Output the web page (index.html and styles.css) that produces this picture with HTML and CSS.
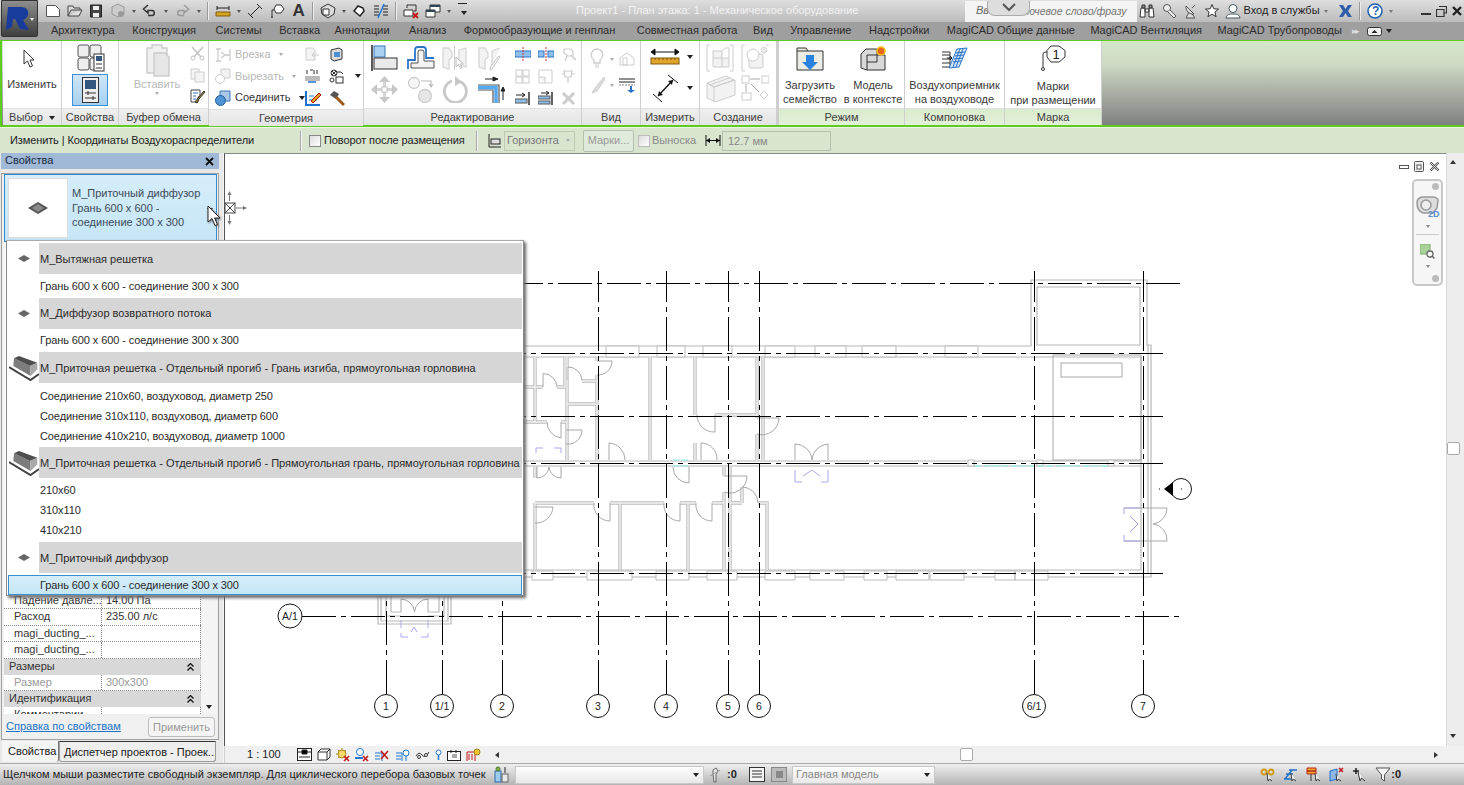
FILE: index.html
```html
<!DOCTYPE html>
<html lang="ru">
<head>
<meta charset="utf-8">
<title>Проект1 - План этажа: 1 - Механическое оборудование</title>
<link rel="stylesheet" href="styles.css">
</head>
<body>
<div class="app">
  <header class="titlebar">
    <div class="qat">
      <svg class="i" width="16" height="16" viewBox="0 0 16 16"><path d="M1.5 2.5h9l4 4v7h-13z" fill="#fff" stroke="#555"/></svg>
      <svg class="i" width="16" height="16" viewBox="0 0 16 16"><path d="M1 13V3h5l1 2h6v2H4l-3 6h11l3-6h-2" fill="#ddd" stroke="#444"/></svg>
      <svg class="i" width="14" height="16" viewBox="0 0 14 16"><path d="M1.5 2h11v12h-11z" fill="#444" stroke="#222"/><path d="M4 3h6v4H4zM4 10h6v4H4z" fill="#eee"/></svg>
      <svg class="i" width="16" height="16" viewBox="0 0 16 16"><path d="M8 1l6 3v7l-6 3-6-3V4z" fill="#ccc" stroke="#999"/><circle cx="11" cy="11" r="3" fill="#999"/></svg>
      <i class="caret"></i>
      <svg class="i" width="16" height="16" viewBox="0 0 16 16"><path d="M6 2L1.5 6 6 10V7.5h4c3 0 3 5 0 5H6" fill="none" stroke="#333" stroke-width="1.5"/></svg>
      <i class="caret"></i>
      <svg class="i" width="16" height="16" viewBox="0 0 16 16"><path d="M10 2l4.5 4L10 10V7.5H6c-3 0-3 5 0 5h4" fill="none" stroke="#999" stroke-width="1.5"/></svg>
      <i class="caret"></i>
      <b class="sep"></b>
      <svg class="i" width="16" height="16" viewBox="0 0 16 16"><path d="M2 5h12M2 3v4M14 3v4" stroke="#222" fill="none"/><path d="M1 9h14v4H1z" fill="#d9a520" stroke="#7a5c10"/></svg>
      <i class="caret"></i>
      <svg class="i" width="16" height="16" viewBox="0 0 16 16"><path d="M3 13L13 3M1 10l5 5M10 1l5 5" stroke="#222" fill="none"/></svg>
      <svg class="i" width="16" height="16" viewBox="0 0 16 16"><path d="M7 2h5l3 4-3 4H7L5 6z" fill="#fff" stroke="#333"/><path d="M5 7H3v6" fill="none" stroke="#333"/><circle cx="3" cy="14" r="1" fill="#333"/></svg>
      <span class="qat-a">A</span>
      <b class="sep"></b>
      <svg class="i" width="16" height="16" viewBox="0 0 16 16"><path d="M8 1l7 4-1 6-6 4-6-4-1-6z" fill="#ddd" stroke="#333"/><path d="M3 6h6v6H3z" fill="#fff" stroke="#333"/></svg>
      <i class="caret"></i>
      <svg class="i" width="14" height="16" viewBox="0 0 14 16"><path d="M2 8l4-5 5 2 1 3-4 5z" fill="#fff" stroke="#222" stroke-width="1.5"/></svg>
      <svg class="i" width="16" height="16" viewBox="0 0 16 16"><path d="M1 3h5M1 6h5M1 9h5M1 12h5M10 3h5M10 6h5M10 9h5M10 12h5" stroke="#222"/><path d="M11 1L5 15" stroke="#1e78d2" stroke-width="1.5"/></svg>
      <b class="sep"></b>
      <svg class="i" width="16" height="16" viewBox="0 0 16 16"><path d="M1 7h9v6H1z" fill="#fff" stroke="#333"/><path d="M4 5V2h9v6h-2" fill="none" stroke="#333"/><path d="M10 10l5 5M15 10l-5 5" stroke="#c01818" stroke-width="1.8"/></svg>
      <svg class="i" width="16" height="16" viewBox="0 0 16 16"><path d="M5 2h10v7H5z" fill="#fff" stroke="#333"/><path d="M1 7h9v7H1z" fill="#fff" stroke="#333"/><path d="M5 2h10v2H5zM1 7h9v2H1z" fill="#345"/></svg>
      <i class="caret"></i>
      <span class="qat-menu"><i class="caret dark"></i></span>
    </div>
    <div class="doc-title">Проект1 - План этажа: 1 - Механическое оборудование</div>
    <div class="search"><span class="search-left">Вв</span><span class="search-tab"><svg width="16" height="9" viewBox="0 0 16 9"><path d="M2 1l6 6 6-6" fill="none" stroke="#555" stroke-width="2"/></svg></span><span class="search-text">ключевое слово/фразу</span></div>
    <div class="infocenter">
      <svg class="i" width="16" height="16" viewBox="0 0 16 16"><path d="M2 5h4v9H1zM10 5h4l1 9h-5zM6 6h4v3H6z" fill="#fff" stroke="#333"/><path d="M3 2h3v3H3zM10 2h3v3h-3z" fill="#888" stroke="#333"/></svg>
      <svg class="i" width="16" height="16" viewBox="0 0 16 16"><circle cx="5" cy="5" r="3.5" fill="#eee" stroke="#555"/><path d="M8 7l6 6-2 2-6-6" fill="#eee" stroke="#555"/></svg>
      <svg class="i" width="14" height="16" viewBox="0 0 14 16"><path d="M2 3a7 7 0 0 0 8 8zM5 9l-3 6h9l-3-4M8 5l3-3" fill="#ddd" stroke="#555"/></svg>
      <svg class="i" width="14" height="16" viewBox="0 0 14 16"><path d="M7 1.5l1.8 4.3 4.7.3-3.6 3 1.2 4.6L7 11.200l-4.100 2.500 1.200-4.600-3.600-3 4.700-.3z" fill="#fff" stroke="#333"/></svg>
      <svg class="i user" width="16" height="16" viewBox="0 0 16 16"><circle cx="8" cy="5.500" r="4" fill="#fff" stroke="#456"/><path d="M1 15c1-4 4-4 7-4s6 0 7 4z" fill="#fff" stroke="#456"/></svg>
      <span class="login">Вход в службы</span><i class="caret light"></i>
      <svg class="i xicon" width="15" height="16" viewBox="0 0 15 16"><path d="M1 2h4l2.500 4L10 2h4l-4 6 4 6h-4l-2.500-4L5 14H1l4-6z" fill="#2f5da8"/></svg>
      <b class="sep"></b>
      <svg class="i" width="16" height="16" viewBox="0 0 16 16"><circle cx="8" cy="8" r="7" fill="#fff" stroke="#1e5fb0" stroke-width="1.500"/><text class="svg-help" x="5" y="12">?</text></svg>
      <i class="caret light"></i>
      <span class="winbtns">
        <svg width="10" height="10" viewBox="0 0 10 10"><path d="M0 8h10" stroke="#333" stroke-width="2"/></svg>
        <svg width="11" height="11" viewBox="0 0 11 11"><path d="M3 .5h7.500V7H8M.5 3.500H8V10.500H.5z" fill="none" stroke="#333" stroke-width="1.200"/></svg>
        <svg width="10" height="10" viewBox="0 0 10 10"><path d="M1 1l8 8M9 1l-8 8" stroke="#222" stroke-width="2.400"/></svg>
      </span>
    </div>
  </header>

  <div class="app-button">
    <svg width="28" height="28" viewBox="0 0 28 28"><path d="M3 2h13c6 0 8 4 7 8-1 3-3 4-5 5l6 10-9-1-5-10-2 0-1 8-6 3 1-12z" fill="#183c9c"/></svg>
    <i class="caret app-caret"></i>
  </div>

  <nav class="tabs">
    <span>Архитектура</span><span>Конструкция</span><span>Системы</span><span>Вставка</span><span>Аннотации</span><span>Анализ</span><span>Формообразующие и генплан</span><span>Совместная работа</span><span>Вид</span><span>Управление</span><span>Надстройки</span><span>MagiCAD Общие данные</span><span>MagiCAD Вентиляция</span><span>MagiCAD Трубопроводы</span>
    <em class="tabs-more">▸▸</em>
    <svg class="tabs-min" width="15" height="9" viewBox="0 0 15 9"><rect x=".5" y=".5" width="14" height="8" rx="2" fill="#eee" stroke="#333"/><path d="M4.500 6l3-3 3 3z" fill="#222"/></svg>
    <i class="caret dark"></i>
  </nav>

  <section class="ribbon">
    <div class="panel w-select">
      <div class="body col-center">
        <svg class="cursor-big" width="12" height="19" viewBox="0 0 12 19"><path d="M1 1v14l3.500-3 2.500 6 2.500-1-2.500-6H11z" fill="#fff" stroke="#333"/></svg>
        <span class="lbl">Изменить</span>
      </div>
      <div class="ptitle">Выбор <i class="caret dark"></i></div>
    </div>
    <div class="panel w-props">
      <div class="body col-center top4">
        <svg width="30" height="28" viewBox="0 0 30 28"><g fill="#eee" stroke="#555"><rect x="3" y="1" width="11" height="12" rx="2"/><rect x="15" y="1" width="11" height="12" rx="2"/><rect x="3" y="14" width="11" height="12" rx="2"/><rect x="15" y="14" width="6" height="12" rx="2"/></g><rect x="19" y="10" width="10" height="17" fill="#fff" stroke="#333"/><rect x="21" y="12" width="6" height="5" fill="#33567f"/><path d="M21 20h6M21 24h6" stroke="#333"/></svg>
        <div class="selbtn"><svg width="17" height="26" viewBox="0 0 17 26"><rect x=".5" y=".5" width="16" height="25" fill="#eee" stroke="#333"/><rect x="3" y="3" width="11" height="9" fill="#33567f"/><path d="M3 16h11M3 21h11" stroke="#333"/><path d="M6 14v4M11 19v4" stroke="#333"/></svg></div>
      </div>
      <div class="ptitle">Свойства</div>
    </div>
    <div class="panel w-clip">
      <div class="body clip-body">
        <div class="clip-main">
          <svg width="25" height="33" viewBox="0 0 25 33"><path d="M2 4h5V1h10v3h5v25H2z" fill="#f0f0f0" stroke="#ccc" stroke-width="1.500"/><path d="M9 9h11l4 4v19H9z" fill="#e6e6e6" stroke="#ccc" stroke-width="1.500"/></svg>
          <span class="lbl off">Вставить</span>
          <i class="caret off-c"></i>
        </div>
        <div class="clip-side">
          <svg width="15" height="15" viewBox="0 0 15 15"><path d="M2 1l9 10M13 1L4 11" stroke="#c4c4c4" stroke-width="1.600"/><circle cx="3" cy="12" r="2" fill="none" stroke="#c4c4c4"/><circle cx="12" cy="12" r="2" fill="none" stroke="#c4c4c4"/></svg>
          <svg width="15" height="15" viewBox="0 0 15 15"><path d="M1 1h8v10H1z" fill="#f4f4f4" stroke="#ccc"/><path d="M5 4h9v10H5z" fill="#f4f4f4" stroke="#ccc"/></svg>
          <svg width="16" height="16" viewBox="0 0 16 16"><path d="M1 1h9v6l-2 1v5H1z" fill="#fff" stroke="#444"/><path d="M3 4h5M3 7h3M3 10h3" stroke="#2f6fc0"/><path d="M14 2l1 1-6 7-2 4-2-1 3-4z" fill="#b08a3a" stroke="#333"/></svg>
        </div>
      </div>
      <div class="ptitle">Буфер обмена</div>
    </div>
    <div class="panel w-geom">
      <div class="body geom-body">
        <div class="geom-rows">
          <div class="grow off"><svg width="16" height="16" viewBox="0 0 16 16"><path d="M1 2h5M1 14h5M3 2v12M15 2v12M10 8h5M6 5l4 3-4 3" fill="none" stroke="#ccc" stroke-width="1.300"/></svg><span>Врезка</span><i class="caret off-c"></i></div>
          <div class="grow off"><svg width="16" height="16" viewBox="0 0 16 16"><path d="M6 1h9v9H6z" fill="#f2f2f2" stroke="#ccc"/><circle cx="5" cy="11" r="4.500" fill="#fff" stroke="#ccc"/></svg><span>Вырезать</span><i class="caret off-c"></i></div>
          <div class="grow"><svg width="16" height="16" viewBox="0 0 16 16"><path d="M5 1h10v10H5z" fill="#a9c8e8" stroke="#3a78b8"/><circle cx="5.500" cy="10.500" r="5" fill="#4f94d4" stroke="#245f9c"/></svg><span>Соединить</span><i class="caret dark"></i></div>
        </div>
        <div class="geom-icons">
          <svg width="15" height="15" viewBox="0 0 15 15"><path d="M1 1h7l2 2v10H1z" fill="#f4f4f4" stroke="#ccc"/><path d="M14 8H7l3-3M7 8l3 3" fill="none" stroke="#ccc"/></svg>
          <svg width="14" height="15" viewBox="0 0 14 15"><path d="M2 3l8-2 3 2v9l-8 2-3-2z" fill="#ddd" stroke="#333"/><rect x="5" y="5" width="6" height="5" fill="#4c90d0"/></svg>
          <span></span>
          <svg width="15" height="15" viewBox="0 0 15 15"><path d="M0 8h15M0 11h15" stroke="#777"/><rect y="7" width="15" height="4" fill="#bbb"/><path d="M5 1h3M9 1v4M12 1v4M2 1v4" stroke="#333"/><path d="M3 13h8" stroke="#2070d0" stroke-width="1.500"/></svg>
          <svg width="20" height="15" viewBox="0 0 20 15"><circle cx="5" cy="4" r="3" fill="#eee" stroke="#333"/><path d="M3 2l4 4M7 2l-4 4" stroke="#333"/><circle cx="3" cy="11" r="2" fill="#fff" stroke="#333"/><rect x="7" y="8" width="7" height="6" fill="#fff" stroke="#333"/><path d="M8 3h4l2 2" fill="none" stroke="#333"/></svg>
          <i class="caret dark"></i>
          <svg width="16" height="16" viewBox="0 0 16 16"><path d="M1 1v14h14" fill="none" stroke="#2070d0" stroke-width="2"/><path d="M4 6h5M4 10h8" stroke="#2070d0"/><path d="M6 11L14 3l2 2-8 8z" fill="#e0a020" stroke="#a00"/></svg>
          <svg width="16" height="16" viewBox="0 0 16 16"><path d="M1 5l4-4 5 3-3 5z" fill="#555"/><path d="M7 7l8 8" stroke="#9a5a20" stroke-width="3"/></svg>
        </div>
      </div>
      <div class="ptitle">Геометрия</div>
    </div>
    <div class="panel w-edit">
      <div class="body edit-body">
        <div class="edit-big">
          <svg width="27" height="26" viewBox="0 0 27 26"><rect x="3" y="1" width="11" height="11" fill="#a9d0f0" stroke="#3a78b8"/><rect x="3" y="13" width="23" height="11" fill="#eaeaea" stroke="#333"/><path d="M1 0v26" stroke="#222" stroke-width="1.500"/></svg>
          <svg width="28" height="26" viewBox="0 0 28 26"><path d="M1 24v-9h7V5q0-3 3-3h5q3 0 3 3v8h8" fill="none" stroke="#2a74c8" stroke-width="1.800"/><path d="M4 23v-5h7V7q0-2 2-2h2q2 0 2 2v9h10v7z" fill="#f4f4f4" stroke="#555"/></svg>
          <svg width="25" height="26" viewBox="0 0 25 26"><path d="M1 3h6l3 5v4l-3 3v9l-6-2zM24 3l-7 2v15l7 2z" fill="#f2f2f2" stroke="#d6d6d6" stroke-width="1.300"/><path d="M12.500 1v24" stroke="#ccc"/><path d="M14 12v10l2.500-2.500 2 4 1.500-1-2-3.500h3.500z" fill="#f8f8f8" stroke="#c0c0c0"/></svg>
          <svg width="24" height="26" viewBox="0 0 24 26"><path d="M1 3h6l3 5v4l-3 3v9l-6-2zM22 3l-8 3v14" fill="#f2f2f2" stroke="#d6d6d6" stroke-width="1.300"/><path d="M22 12L14 24l-2 1 .5-3 8-11z" fill="#f8f8f8" stroke="#c4c4c4"/></svg>
          <svg width="27" height="27" viewBox="0 0 27 27"><g fill="#c8c8c8"><path d="M13.500 0l5.500 6h-11zM13.500 27l5.500-6h-11zM0 13.500l6-5.500v11zM27 13.500l-6-5.500v11z"/></g><path d="M6 13.500h15M13.500 6v15" stroke="#d4d4d4" stroke-width="3"/><rect x="11" y="11" width="5" height="5" fill="#fff" stroke="#c4c4c4"/></svg>
          <svg width="27" height="27" viewBox="0 0 27 27"><circle cx="7" cy="7" r="5.500" fill="#f6f6f6" stroke="#ccc" stroke-width="1.300"/><circle cx="18" cy="20" r="6.500" fill="#e6e6e6" stroke="#ccc" stroke-width="1.300"/><path d="M14 5h10v5M22 8l2 3 2-3" fill="none" stroke="#bbb" stroke-width="1.200"/></svg>
          <svg width="26" height="27" viewBox="0 0 26 27"><path d="M18 5.500a11 11 0 1 1-8-.5" fill="none" stroke="#c8c8c8" stroke-width="2.800"/><path d="M13 0v10l7-4z" fill="#c8c8c8"/></svg>
          <svg width="27" height="27" viewBox="0 0 27 27"><path d="M7 3h12M15 1l5 2-5 2z" fill="#222" stroke="#222"/><path d="M0 9h21v18M0 14h15v13" fill="none" stroke="#555" stroke-width="1.200"/><path d="M0 11.500h18V27" fill="none" stroke="#55a8ee" stroke-width="3.500"/><path d="M25 12v12M23 15l2-4 2 4z" fill="#222" stroke="#222"/></svg>
        </div>
        <div class="edit-small">
          <svg width="16" height="14" viewBox="0 0 16 14"><rect y="4" width="16" height="6" fill="#8fc0ea" stroke="#2a74c8"/><path d="M8 0v14" stroke="#c33" stroke-dasharray="2 1"/></svg>
          <svg width="16" height="14" viewBox="0 0 16 14"><rect y="4" width="6" height="6" fill="#8fc0ea" stroke="#2a74c8"/><rect x="10" y="4" width="6" height="6" fill="#8fc0ea" stroke="#2a74c8"/><path d="M8 0v14" stroke="#c33" stroke-dasharray="2 1"/></svg>
          <svg width="16" height="15" viewBox="0 0 16 15"><path d="M3 2h7l2 3v4H7L3 6zM6 9l-2 5M10 8l4 5M11 9l4 4" fill="none" stroke="#ccc" stroke-width="1.200"/></svg>
          <svg width="15" height="15" viewBox="0 0 15 15"><g fill="#fff" stroke="#ccc"><rect x="1" y="1" width="6" height="6"/><rect x="8" y="1" width="6" height="6"/><rect x="1" y="8" width="6" height="6"/><rect x="8" y="8" width="6" height="6"/></g></svg>
          <svg width="15" height="15" viewBox="0 0 15 15"><path d="M1 1h13v13H1z" fill="#fff" stroke="#ccc"/><path d="M1 8h6v6" fill="#f0f0f0" stroke="#ccc"/></svg>
          <svg width="15" height="15" viewBox="0 0 15 15"><path d="M3 2h8l-1 6H4zM7 8v6M1 5h2M11 5h3" fill="none" stroke="#ccc" stroke-width="1.200"/></svg>
          <svg width="15" height="15" viewBox="0 0 15 15"><path d="M1 4h9M7 2l3 2-3 2" fill="none" stroke="#222"/><path d="M14 1v13" stroke="#222" stroke-width="1.400"/><rect y="8" width="12" height="4" fill="#8fc0ea" stroke="#555"/></svg>
          <svg width="15" height="15" viewBox="0 0 15 15"><path d="M3 2h8M8 0l3 2-3 2" fill="none" stroke="#222"/><path d="M14 1v13" stroke="#222" stroke-width="1.400"/><rect y="5" width="12" height="3" fill="#8fc0ea" stroke="#555"/><rect y="10" width="12" height="3" fill="#8fc0ea" stroke="#555"/></svg>
          <svg width="15" height="15" viewBox="0 0 15 15"><path d="M2 2l11 11M13 2L2 13" stroke="#ccc" stroke-width="3"/></svg>
        </div>
      </div>
      <div class="ptitle">Редактирование</div>
    </div>
    <div class="panel w-view">
      <div class="body view-body">
        <svg width="14" height="22" viewBox="0 0 14 22"><path d="M7 1a6 6 0 0 1 3 11v3H4v-3A6 6 0 0 1 7 1z" fill="#fff" stroke="#ccc" stroke-width="1.300"/><path d="M5 17h4M5 19h4" stroke="#ccc"/></svg>
        <i class="caret off-c"></i>
        <svg width="16" height="14" viewBox="0 0 16 14"><path d="M1 6l7-5 7 5v7H1z" fill="#fff" stroke="#ccc"/><path d="M4 6h4v7H4z" fill="none" stroke="#ccc"/></svg>
        <svg width="15" height="18" viewBox="0 0 15 18"><path d="M14 1l-9 11-3 5 5-2 8-12z" fill="#ddd" stroke="#ccc"/></svg>
        <i class="caret off-c"></i>
        <svg width="16" height="15" viewBox="0 0 16 15"><path d="M0 1h16M0 4h16" stroke="#222"/><path d="M0 7h16" stroke="#888" stroke-dasharray="2 1"/><path d="M11 8v4h-3l4 3 4-3h-3V8z" fill="#2a74c8"/></svg>
      </div>
      <div class="ptitle">Вид</div>
    </div>
    <div class="panel w-measure">
      <div class="body measure-body">
        <svg width="30" height="18" viewBox="0 0 30 18"><path d="M3 4h24M1 4l4-3v6zM29 4l-4-3v6z" fill="#111" stroke="#111"/><rect x="1" y="10" width="28" height="6" fill="#e2a52c" stroke="#7c5a10"/><path d="M5 10v2M9 10v2M13 10v2M17 10v2M21 10v2M25 10v2" stroke="#7c5a10"/></svg>
        <i class="caret dark"></i>
        <svg width="27" height="28" viewBox="0 0 27 28"><path d="M6 22L21 6" stroke="#111" stroke-width="1.200"/><path d="M1 20l9 8M16 1l10 8" stroke="#111"/><path d="M6 22l1-5 4 4zM21 6l-1 5-4-4z" fill="#111"/></svg>
        <i class="caret dark"></i>
      </div>
      <div class="ptitle">Измерить</div>
    </div>
    <div class="panel w-create">
      <div class="body create-body">
        <svg width="28" height="28" viewBox="0 0 28 28"><path d="M4 1H1v26h3M24 1h3v26h-3" fill="none" stroke="#ccc"/><path d="M7 7h9v7h7v9H7z" fill="#f2f2f2" stroke="#ccc"/><path d="M7 14h9v9M16 7l3-3h4v10" fill="none" stroke="#ccc"/></svg>
        <svg width="29" height="28" viewBox="0 0 29 28"><path d="M4 1H1v26h3M25 1h3" fill="none" stroke="#ccc"/><rect x="8" y="10" width="14" height="14" rx="2" fill="#f2f2f2" stroke="#ccc"/><circle cx="12" cy="11" r="6" fill="#fff" stroke="#ccc"/><circle cx="23" cy="6" r="3" fill="#e8e8e8" stroke="#ccc" stroke-dasharray="2 1"/></svg>
        <svg width="30" height="28" viewBox="0 0 30 28"><path d="M1 8l19-7 8 4-20 7zM1 8v15l8 4 20-7V5L8 12 1 8" fill="#f2f2f2" stroke="#ccc"/><path d="M4 10l19-7M8 12v15" stroke="#ccc"/></svg>
        <svg width="28" height="26" viewBox="0 0 28 26"><g fill="#fff" stroke="#ccc"><rect x="1" y="1" width="7" height="7"/><rect x="21" y="1" width="7" height="7"/><rect x="1" y="18" width="9" height="7"/><path d="M23 16l4 4-4 4-4-4z"/></g><path d="M9 4h10M5 9v8M10 9l8 8" stroke="#aaa"/></svg>
      </div>
      <div class="ptitle">Создание</div>
    </div>
    <div class="ribbon-gap"></div>
    <div class="panel ctx w-mode">
      <div class="body two-btns">
        <div class="bigbtn">
          <svg width="28" height="26" viewBox="0 0 28 26"><path d="M1 3h9l2 3h15v19H1z" fill="#ecece6" stroke="#333"/><path d="M1 6h11" stroke="#333"/><path d="M10 10h8v7h4l-8 8-8-8h4z" fill="#2a82e0"/></svg>
          <span>Загрузить<br>семейство</span>
        </div>
        <div class="bigbtn">
          <svg width="28" height="26" viewBox="0 0 28 26"><path d="M2 9l5-5h11v6h8v15H8l-6-2z" fill="#d8d8d8" stroke="#333"/><path d="M8 10h10M8 10v15M8 17h10v-7" fill="none" stroke="#333"/><circle cx="22" cy="6" r="4" fill="#e8641a" stroke="#f5c118" stroke-width="1.500"/></svg>
          <span>Модель<br>в контексте</span>
        </div>
      </div>
      <div class="ptitle ctx-t">Режим</div>
    </div>
    <div class="panel ctx w-layout">
      <div class="body one-btn">
        <div class="bigbtn">
          <svg width="27" height="22" viewBox="0 0 27 22"><path d="M1 8h8M1 12h8M1 16h8M1 5h8v15H1" fill="none" stroke="#333"/><path d="M16 2l10-1-8 19-10 1z" fill="#cfe2f6" stroke="#2a74c8"/><path d="M15 6l9-1M14 9l9-1M13 12l9-1M12 15l8-1M19 2l-7 18M22 2l-7 18" stroke="#2a74c8"/><path d="M6 11h5M9 9l2 2-2 2" fill="none" stroke="#111"/></svg>
          <span>Воздухоприемник<br>на воздуховоде</span>
        </div>
      </div>
      <div class="ptitle ctx-t">Компоновка</div>
    </div>
    <div class="panel ctx w-tag">
      <div class="body one-btn">
        <div class="bigbtn">
          <svg width="28" height="27" viewBox="0 0 28 27"><path d="M8 7h-1q-3 0-3 2v13" fill="none" stroke="#333"/><circle cx="4" cy="24" r="1.500" fill="#fff" stroke="#333"/><path d="M12 1h8l6 4.500V12l-6 5h-8l-4-5V5.500z" fill="#fff" stroke="#333"/><text class="svg-tag" x="13.500" y="14">1</text></svg>
          <span>Марки<br>при размещении</span>
        </div>
      </div>
      <div class="ptitle ctx-t">Марка</div>
    </div>
  </section>

  <div class="options">
    <span class="opt-ctx">Изменить | Координаты Воздухораспределители</span>
    <b class="opt-sep"></b>
    <i class="check"></i><span class="opt-rot">Поворот после размещения</span>
    <b class="opt-sep2"></b>
    <svg class="opt-ic" width="15" height="15" viewBox="0 0 15 15"><path d="M2 1v13h12" fill="none" stroke="#222"/><rect x="4" y="6" width="9" height="5" fill="#ddd" stroke="#222"/></svg>
    <span class="opt-select">Горизонта<i class="caret off-c"></i></span>
    <span class="opt-btn">Марки...</span>
    <i class="check off-chk"></i><span class="opt-lead">Выноска</span>
    <svg class="opt-ic2" width="16" height="13" viewBox="0 0 16 13"><path d="M1 1v11M15 1v11M1 6.500h14" stroke="#111"/><path d="M1 6.500l4-2.500v5zM15 6.500l-4-2.500v5z" fill="#111"/></svg>
    <span class="opt-input">12.7 мм</span>
  </div>

  <main class="main">
    <aside class="side">
      <div class="side-title"><span>Свойства</span><svg width="9" height="9" viewBox="0 0 9 9"><path d="M1 1l7 7M8 1L1 8" stroke="#111" stroke-width="1.800"/></svg></div>
      <div class="side-frame">
        <div class="type-sel">
          <div class="type-thumb"><svg width="20" height="12" viewBox="0 0 20 12"><path d="M10 0l10 6-10 6L0 6z" fill="#555"/><path d="M10 2l6 4-6 4-6-4z" fill="#8a8a8a"/></svg></div>
          <div class="type-name">М_Приточный диффузор<br>Грань 600 x 600 -<br>соединение 300 x 300</div>
          <i class="caret dark type-caret"></i>
        </div>
        <div class="props">
          <div class="props-list">
            <div class="prow"><span>Падение давле...</span><span>14.00 Па</span></div>
            <div class="prow"><span>Расход</span><span>235.00 л/с</span></div>
            <div class="prow"><span>magi_ducting_...</span><span></span></div>
            <div class="prow"><span>magi_ducting_...</span><span></span></div>
            <div class="phead"><span>Размеры</span><svg width="7" height="8" viewBox="0 0 7 8"><path d="M.5 3.500l3-3 3 3M.5 7.500l3-3 3 3" fill="none" stroke="#111" stroke-width="1.300"/></svg></div>
            <div class="prow dim"><span>Размер</span><span>300x300</span></div>
            <div class="phead"><span>Идентификация</span><svg width="7" height="8" viewBox="0 0 7 8"><path d="M.5 3.500l3-3 3 3M.5 7.500l3-3 3 3" fill="none" stroke="#111" stroke-width="1.300"/></svg></div>
            <div class="prow clipped"><span>Комментарии</span><span></span></div>
          </div>
          <div class="props-scroll"><i class="caret dark"></i></div>
        </div>
        <div class="props-foot"><a class="link">Справка по свойствам</a><span class="apply">Применить</span></div>
      </div>
      <div class="side-tabs"><span class="stab on">Свойства</span><span class="stab">Диспетчер проектов - Проек...</span></div>
    </aside>

    <section class="view">
      <div class="view-row">
        <div class="canvas">
          <svg class="drawing" width="1221" height="593" viewBox="225 154 1221 593">
            <defs>
              <g id="iw">
                <path d="M535 357V422H523M535 387H523M535 387H543M557 387H565V357M567 357V367M567 380V460M567 404H596M582 381H596M597 375V460M597 357V361M650 357V460M695 357V415M695 443V460M715 415H757M757 357V418M757 434V460M763 357V460"/>
                <path d="M547 422H535M561 422H566M535 478V467M535 503V570M535 503H594M610 503H664M620 503V570M680 503H696M688 503V570M712 503H724M724 467V476M724 492V570M730 467V570M730 503H742M742 487V503M758 503H767V570"/>
              </g>
            </defs>
            <g class="wall-o">
              <path d="M523 346H1031V280H1147V345H1151V577H523M523 357H1141V570H523M523 461H1141M523 466H1141M1037 287H1140V345H1037zM1148 345V574"/>
              <path d="M378 596V624H451V596M381 596V621H448V596M386 596V616H401M391 596V612H401M428 612H439V596M428 616H444V596"/>
            </g>
            <use class="wi-base" href="#iw"/>
            <use class="wi-core" href="#iw"/>
            <rect class="thin" x="1053" y="355" width="88" height="105"/>
            <rect class="thin" x="1061" y="363" width="61" height="14"/>
            <g class="windows">
              <path d="M606 346h33v11h-33zM657 346h28v11h-28zM703 346h29v11h-29zM765 346h30v11h-30zM815 346h31v11h-31zM862 346h34v11h-34zM945 346h33v11h-33z"/>
              <path d="M532 571h21v9h-21zM587 571h45v9h-45zM656 571h33v9h-33zM707 571h30v9h-30zM765 571h30v9h-30zM810 571h34v9h-34zM864 571h23v9h-23zM896 571h33v9h-33zM930 571h34v9h-34zM995 571h20v9h-20zM1015 571h33v9h-33z"/>
              <path d="M968 460h6v6h-6zM1037 460h6v6h-6zM1108 460h6v6h-6z"/>
            </g>
            <g class="door">
              <path d="M543 387V373.500A14 14 0 0 1 557 387M568 380V367A14 14 0 0 1 582 380M597 361H612A14 14 0 0 1 597 375M547 422A16 16 0 0 0 561 438V422M566 430H582A14 14 0 0 1 566 444M609 460V443A17 17 0 0 1 625 460M697 415A17 17 0 0 0 715 432V415M757 418H779A17 17 0 0 1 757 434M701 460V443A16 16 0 0 1 717 460"/>
              <path d="M795 460V444A17 17 0 0 1 812 460A17 17 0 0 1 828 444V460M673 467A16 16 0 0 0 689 483V467M537 478V467M537 478A12 12 0 0 0 549 467A12 12 0 0 0 561 478V467M724 476H747A17 17 0 0 1 724 492M742 487A16 16 0 0 1 758 503M535 507H553A17 17 0 0 1 535 523M594 503A16 16 0 0 0 610 521V503M664 503A16 16 0 0 0 680 521V503M696 503A16 16 0 0 0 712 521V503"/>
              <path d="M401 612V599A14 14 0 0 1 414.500 612A14 14 0 0 1 428 599V612"/>
              <path d="M1124 508H1167A16 16 0 0 1 1153 524A16 16 0 0 1 1167 541H1124"/>
            </g>
            <g class="blue-dash">
              <path d="M536 453V448H543M554 448H561V453M795 470V482H802M821 482H828V470M803 476L812 470L820 476M1140 508H1124V514M1124 535V541H1140M1130 516L1138 524L1130 532M401 620V628M401 633V637H408M428 620V628M428 633V637H421M411 632L414 627L417 632"/>
            </g>
            <path class="cyan" d="M673 460H689M673 466H689M975 466H1107"/>
            <g class="grid-h">
              <path d="M1180 283H305M1163 353H305M1163 416H305M1163 463H305M1163 573H305M302 616H1180"/>
            </g>
            <g class="grid-v">
              <path d="M386 694V590M442 694V590M502 694V271M598 694V271M666 694V271M728 694V271M759 694V271M1034 694V271M1143 694V271"/>
            </g>
            <g class="bubbles">
              <circle cx="386" cy="706" r="11.500"/><circle cx="442" cy="706" r="11.500"/><circle cx="502" cy="706" r="11.500"/><circle cx="598" cy="706" r="11.500"/><circle cx="666" cy="706" r="11.500"/><circle cx="728" cy="706" r="11.500"/><circle cx="759" cy="706" r="11.500"/><circle cx="1034" cy="706" r="11.500"/><circle cx="1143" cy="706" r="11.500"/><circle cx="290" cy="616" r="12"/>
              <circle cx="1181" cy="489" r="10.500"/>
            </g>
            <path class="fill-k" d="M1164 489L1173 482V496Z"/>
            <path class="fill-k" d="M1159 488.500h1v1h-1zM1181 488.500h1v1h-1z"/>
            <g class="bub-text">
              <text x="386" y="710">1</text><text x="442" y="710">1/1</text><text x="502" y="710">2</text><text x="598" y="710">3</text><text x="666" y="710">4</text><text x="728" y="710">5</text><text x="759" y="710">6</text><text x="1034" y="710">6/1</text><text x="1143" y="710">7</text><text x="290" y="620">А/1</text>
            </g>
            <g class="ctrl">
              <rect x="225" y="203" width="10" height="10" fill="#fff" stroke="#444"/><path d="M225 203l10 10M235 203l-10 10" stroke="#444"/>
              <path d="M229.500 191l-2 4h4zM229.500 225l-2-4h4zM247 208l-4-2v4z" fill="#777"/><path d="M229.500 195v6M229.500 215v6M236 208h8" stroke="#777"/>
            </g>
          </svg>
          <div class="win-ctrl">
            <svg width="10" height="6" viewBox="0 0 10 6"><rect x=".5" y="1.500" width="9" height="3" fill="#fff" stroke="#555"/></svg>
            <svg width="10" height="11" viewBox="0 0 10 11"><rect x=".5" y=".5" width="9" height="10" rx="1" fill="#eee" stroke="#555"/><rect x="3" y="4" width="4" height="4" fill="#fff" stroke="#555"/></svg>
            <svg width="11" height="11" viewBox="0 0 11 11"><path d="M1.500 1.500l8 8M9.500 1.500l-8 8" stroke="#555" stroke-width="2.400"/><path d="M1.500 1.500l8 8M9.500 1.500l-8 8" stroke="#eee" stroke-width=".8"/></svg>
          </div>
          <div class="nav-bar">
            <span class="nav-x"></span>
            <svg class="nav-wheel" width="24" height="24" viewBox="0 0 24 24"><path d="M6 2h10q5 0 6 3l-1 8-4 5H7Q1 16 1 8q0-5 5-6z" fill="#ddd" stroke="#999" stroke-width="1.500"/><circle cx="10" cy="10" r="5" fill="#eee" stroke="#999" stroke-width="1.500"/><text class="svg-2d" x="12" y="22">2D</text></svg>
            <i class="caret nav-c"></i>
            <b class="nav-sep"></b>
            <svg class="nav-zoom" width="15" height="15" viewBox="0 0 15 15"><rect x="0" y="0" width="10" height="10" fill="#a9d29a" stroke="#7caf68"/><circle cx="10" cy="10" r="3" fill="#fff" stroke="#666" stroke-width="1.300"/><path d="M12 12l2.500 2.500" stroke="#666" stroke-width="1.500"/></svg>
            <i class="caret nav-c"></i>
            <span class="nav-min"></span>
          </div>
        </div>
        <div class="vscroll"><i class="up"></i><span class="v-thumb"></span><i class="down"></i></div>
      </div>
      <div class="view-bar">
        <span class="scale">1 : 100</span>
        <div class="vb-icons">
          <svg width="15" height="13" viewBox="0 0 15 13"><rect x=".5" y=".5" width="14" height="12" fill="#fff" stroke="#222"/><path d="M1 4h4M10 4h4M5 2h5v4H5zM2 9h11" stroke="#222"/></svg>
          <svg width="14" height="13" viewBox="0 0 14 13"><path d="M1 4h9v8H1zM1 4l3-3h9v8l-3 3M10 4l3-3" fill="#fff" stroke="#333"/></svg>
          <svg width="14" height="14" viewBox="0 0 14 14"><circle cx="6" cy="6" r="4" fill="#f7d96a" stroke="#b08820"/><path d="M6 0v2M0 6h2M2 2l1 1M10 2l-1 1M2 10l1-1" stroke="#b08820"/><path d="M8 8l5 5M13 8l-5 5" stroke="#c01818" stroke-width="1.600"/></svg>
          <svg width="14" height="14" viewBox="0 0 14 14"><circle cx="5" cy="4" r="3.500" fill="#fff" stroke="#1e78d2"/><path d="M0 10h8" stroke="#1e78d2" stroke-width="2"/><path d="M8 8l5 5M13 8l-5 5" stroke="#c01818" stroke-width="1.600"/></svg>
          <svg width="16" height="14" viewBox="0 0 16 14"><path d="M1 5h7v8M1 8h5M1 11h5" fill="none" stroke="#1e78d2"/><path d="M7 3l7 8M14 3l-7 8" stroke="#c01818" stroke-width="1.600"/></svg>
          <svg width="15" height="14" viewBox="0 0 15 14"><path d="M1 5h6v8M1 8h5M1 11h5" fill="none" stroke="#1e78d2"/><circle cx="11" cy="5" r="3" fill="#fff" stroke="#1e78d2"/><path d="M11 8v5" stroke="#1e78d2"/></svg>
          <svg width="15" height="12" viewBox="0 0 15 12"><path d="M1 7q3-5 6-1t7-3" fill="none" stroke="#333"/><circle cx="4" cy="8" r="1.500" fill="#fff" stroke="#333"/><circle cx="11" cy="6" r="1.500" fill="#fff" stroke="#333"/></svg>
          <svg width="7" height="12" viewBox="0 0 7 12"><circle cx="3.500" cy="3.500" r="2.500" fill="#fff" stroke="#2a7ad0"/><path d="M3.500 6v5" stroke="#2a7ad0" stroke-width="1.500"/></svg>
          <svg width="14" height="12" viewBox="0 0 14 12"><rect x=".5" y="2.500" width="13" height="9" fill="#fff" stroke="#222"/><path d="M4 1v3M9 1v3" stroke="#222"/><rect x="5" y="5" width="5" height="4" fill="#aaa"/></svg>
          <svg width="15" height="14" viewBox="0 0 15 14"><path d="M1 13V4h8v9M3 6v6M6 6v6" fill="none" stroke="#c01818"/><circle cx="11" cy="4" r="3" fill="#f2c430" stroke="#a08010"/></svg>
        </div>
        <div class="hscroll"><i class="left"></i><span class="h-track"><span class="h-thumb"></span></span><i class="right"></i></div>
      </div>
    </section>
  </main>

  <footer class="status">
    <span class="st-text">Щелчком мыши разместите свободный экземпляр. Для циклического перебора базовых точек</span>
    <svg class="st-ic" width="17" height="17" viewBox="0 0 17 17"><rect x="2" y="5" width="6" height="11" fill="#9ccbee" stroke="#2a6cb0"/><rect x="9" y="8" width="6" height="8" fill="#e8e8e8" stroke="#666"/><circle cx="5" cy="3" r="2" fill="#7db04f" stroke="#4a7a2a"/><path d="M12 1v6" stroke="#666" stroke-width="1.500"/></svg>
    <span class="st-combo wide"><i class="caret dark"></i></span>
    <svg class="st-ic2" width="16" height="16" viewBox="0 0 16 16"><path d="M5 7V3l3-2 2 3-2 3v8H6z" fill="#e8e8e8" stroke="#666"/><path d="M2 9l10-6" stroke="#999"/></svg>
    <span class="st-zero">:0</span>
    <svg class="st-ic3" width="16" height="15" viewBox="0 0 16 15"><rect x=".5" y=".5" width="15" height="14" fill="#f4f4f4" stroke="#333"/><path d="M3 4h10M3 7h10M3 10h10" stroke="#333"/></svg>
    <svg class="st-ic3 gap" width="16" height="15" viewBox="0 0 16 15"><rect x=".5" y=".5" width="15" height="14" fill="#bbb" stroke="#888"/><path d="M5 4h7v7H5z" fill="#888"/></svg>
    <span class="st-combo model">Главная модель<i class="caret dark"></i></span>
    <div class="st-right">
      <svg width="15" height="15" viewBox="0 0 15 15"><circle cx="4" cy="5" r="2.500" fill="none" stroke="#d09a10" stroke-width="1.800"/><circle cx="11" cy="5" r="2.500" fill="none" stroke="#d09a10" stroke-width="1.800"/><path d="M7 6l1 8 1.500-2 2.500 2" fill="#fff" stroke="#333"/></svg>
      <svg width="15" height="15" viewBox="0 0 15 15"><path d="M1 12h7M3 7h7M6 3h8M9 3L2 12" fill="none" stroke="#1e6fc8" stroke-width="1.300"/><path d="M8 6l1 8 1.500-2 2.500 2" fill="#fff" stroke="#333"/></svg>
      <svg width="15" height="15" viewBox="0 0 15 15"><path d="M1 1h9v3H1zM1 4h9v3H1z" fill="#f2a62c" stroke="#b02818"/><path d="M5 7v7" stroke="#333"/><path d="M9 6l1 8 1.500-2 2.500 2" fill="#fff" stroke="#333"/></svg>
      <svg width="15" height="15" viewBox="0 0 15 15"><path d="M1 4l7-2v10l-7 2z" fill="#8db8e4" stroke="#1e6fc8"/><path d="M10 1l4 4M14 1l-4 4" stroke="#c01818" stroke-width="1.500"/><path d="M7 7l1 7 1.500-2 2.500 2" fill="#fff" stroke="#333"/></svg>
      <svg width="15" height="15" viewBox="0 0 15 15"><path d="M1 4h6M4 1v6" stroke="#222" stroke-width="1.500"/><path d="M6 5l2 9 1.500-3 3.500 3" fill="#fff" stroke="#333"/></svg>
      <svg width="16" height="15" viewBox="0 0 16 15"><path d="M1 1h14L9.500 8v6l-3-2V8z" fill="#f4f4f4" stroke="#555"/></svg>
      <span class="st-zero tight">:0</span>
    </div>
  </footer>

  <div class="menu">
    <div class="mgroup"><span class="mthumb"><svg width="12" height="7" viewBox="0 0 12 7"><path d="M6 0l6 3.500-6 3.500L0 3.500z" fill="#666"/></svg></span><span class="mname">М_Вытяжная решетка</span></div>
    <div class="mitems single"><div class="mitem">Грань 600 x 600 - соединение 300 x 300</div></div>
    <div class="mgroup"><span class="mthumb"><svg width="12" height="7" viewBox="0 0 12 7"><path d="M6 0l6 3.500-6 3.500L0 3.500z" fill="#666"/></svg></span><span class="mname">М_Диффузор возвратного потока</span></div>
    <div class="mitems single"><div class="mitem">Грань 600 x 600 - соединение 300 x 300</div></div>
    <div class="mgroup"><span class="mthumb"><svg width="30" height="29" viewBox="0 0 30 29"><path d="M0 14L21.500 27 30 21" fill="none" stroke="#444" stroke-width="2"/><path d="M5 5.300l16 7.700.7 10-17.400-10z" fill="#7c7c7c"/><path d="M5 5.300L10 3l18.300 6.700L21 13z" fill="#4e4e4e"/><path d="M21 13l7.300-3.300v6.600L21.700 23z" fill="#a8a8a8"/></svg></span><span class="mname">М_Приточная решетка - Отдельный прогиб - Грань изгиба, прямоугольная горловина</span></div>
    <div class="mitems"><div class="mitem">Соединение 210x60, воздуховод, диаметр 250</div><div class="mitem">Соединение 310x110, воздуховод, диаметр 600</div><div class="mitem">Соединение 410x210, воздуховод, диаметр 1000</div></div>
    <div class="mgroup"><span class="mthumb"><svg width="30" height="29" viewBox="0 0 30 29"><path d="M0 14L21.500 27 30 21" fill="none" stroke="#444" stroke-width="2"/><path d="M5 5.300l16 7.700.7 10-17.400-10z" fill="#7c7c7c"/><path d="M5 5.300L10 3l18.300 6.700L21 13z" fill="#4e4e4e"/><path d="M21 13l7.300-3.300v6.600L21.700 23z" fill="#a8a8a8"/></svg></span><span class="mname">М_Приточная решетка - Отдельный прогиб - Прямоугольная грань, прямоугольная горловина</span></div>
    <div class="mitems tight"><div class="mitem">210x60</div><div class="mitem">310x110</div><div class="mitem">410x210</div></div>
    <div class="mgroup"><span class="mthumb"><svg width="12" height="7" viewBox="0 0 12 7"><path d="M6 0l6 3.500-6 3.500L0 3.500z" fill="#666"/></svg></span><span class="mname">М_Приточный диффузор</span></div>
    <div class="mitem selected">Грань 600 x 600 - соединение 300 x 300</div>
  </div>

  <svg class="mouse" width="14" height="22" viewBox="0 0 14 22"><path d="M1 1v16l4-3.500 3 7 2.500-1-3-6.500H13z" fill="#fff" stroke="#222"/></svg>
</div>
</body>
</html>
```

FILE: styles.css
```css
* { box-sizing: border-box; }
html, body { margin: 0; padding: 0; }
body {
  width: 1464px; height: 785px; overflow: hidden; background: #f0f0f0;
  font: 11px/1.2 "Liberation Sans", Arial, sans-serif; color: #333;
}
svg { display: block; flex: none; }
.app { position: relative; width: 1464px; height: 785px; display: flex; flex-direction: column; }

.caret { display: inline-block; flex: none; width: 0; height: 0; border: 2.5px solid transparent; border-top: 3px solid #555; border-bottom: 0; }
.caret.dark { border-top-color: #222; border-left-width: 3px; border-right-width: 3px; border-top-width: 4px; }
.caret.light { border-top-color: #777; }
.caret.off-c { border-top-color: #aaa; }

/* title bar */
.titlebar { height: 22px; background: linear-gradient(#dedede, #bcbcbc); display: flex; align-items: center; flex: none; }
.qat { display: flex; align-items: center; gap: 6.200px; padding-left: 45px; width: 474px; flex: none; }
.qat .sep { margin: 0 1px 0 0; }
.sep { width: 1px; height: 18px; background: #999; flex: none; box-shadow: 1px 0 0 #eee; }
.qat-a { font: bold 17px/16px "Liberation Sans", sans-serif; color: #333; width: 14px; text-align: center; }
.qat-menu { padding-left: 3px; border-top: 1.500px solid #222; padding-top: 1px; }
.doc-title { width: 444px; padding-left: 102px; color: #f2f2f2; white-space: nowrap; flex: none; font-size: 11px; }
.search { width: 172px; height: 21px; display: flex; align-items: center; flex: none; margin-left: 47px; background: #f4f4f4; }
.search-left { font-style: italic; color: #666; padding-left: 11px; width: 22px; flex: none; white-space: nowrap; }
.search-tab { width: 43px; height: 15px; flex: none; align-self: flex-start; background: #ddd; display: flex; justify-content: center; align-items: center; border-radius: 0 0 8px 8px; border: 1px solid #aaa; border-top: 0; z-index: 1; }
.search-text { font-style: italic; color: #777; margin-left: -14px; white-space: nowrap; font-size: 10.500px; flex: none; }
.infocenter { display: flex; align-items: center; gap: 6.500px; flex: 1; padding-left: 2px; }
.login { color: #222; white-space: nowrap; margin-left: -4px; width: 74px; }
.xicon { margin-left: 3px; }
.winbtns { display: flex; align-items: center; gap: 5px; margin-left: 21px; }

.app-button { position: absolute; left: 1px; top: 0; width: 37px; height: 37px; background: linear-gradient(#8e8e8e, #3f3f3f); border: 1px solid #333; border-radius: 0 0 2px 2px; padding: 4px 0 0 3px; }
.app-caret { position: absolute; right: 3px; top: 17px; border-top-color: #eee; }

/* tabs */
.tabs { height: 18px; flex: none; background: #9f9f9f; display: flex; align-items: center; gap: 17.500px; padding-left: 51px; color: #2c2c2c; white-space: nowrap; }
.tabs span:nth-child(2) { margin-right: 2px; }
.tabs span:nth-child(4) { margin-right: -3px; }
.tabs span:nth-child(5) { margin-right: 2px; }
.tabs span:nth-child(7) { margin-right: 4px; }
.tabs span:nth-child(8) { margin-right: -2px; }
.tabs span:nth-child(12) { margin-right: -2px; }
.tabs span:nth-child(13) { margin-right: -2px; }
.tabs span:nth-child(14) { margin-right: -7px; }
.tabs-more { font-style: normal; font-size: 9px; color: #ddd; letter-spacing: -2px; }
.tabs-min { margin-left: -9px; }
.tabs .caret { margin-left: -13px; }

/* ribbon */
.ribbon { height: 87px; flex: none; display: flex; padding: 0 0 0 3px; border-top: 1px solid #5ccc1e; border-bottom: 2px solid #5ccc1e; background: linear-gradient(#d6e7c9, #d0dcc6 25%, #808080); box-shadow: inset 2px 0 0 #5ccc1e; }
.panel { display: flex; flex-direction: column; background: #fff; border-right: 1px solid #cfcfcf; height: 100%; }
.body { flex: 1; }
.ptitle { height: 17px; flex: none; background: linear-gradient(#efefef, #e4e4e4); text-align: center; line-height: 17px; color: #404040; border-top: 1px solid #e0e0e0; }
.ptitle .caret { margin-left: 3px; vertical-align: 1px; }
.ctx-t { background: linear-gradient(#d9ebcd, #e4f0da); }
.w-select { width: 59px; } .w-props { width: 57px; } .w-clip { width: 90px; } .w-geom { width: 155px; }
.w-edit { width: 218px; } .w-view { width: 59px; } .w-measure { width: 59px; } .w-create { width: 77px; }
.w-mode { width: 126px; } .w-layout { width: 100px; } .w-tag { width: 97px; }
.ribbon-gap { width: 2px; background: #cdcdcd; }
.col-center { display: flex; flex-direction: column; align-items: center; }
.cursor-big { margin: 8px 0 0 -7px; }
.lbl { margin-top: 10px; white-space: nowrap; color: #3a3a3a; }
.lbl.off { color: #b8b8b8; margin-top: 0; }
.top4 { padding-top: 3px; gap: 2px; }
.selbtn { width: 36px; height: 32px; background: linear-gradient(#cfe6f8, #a6d0f0); border: 1px solid #3a8fd8; display: flex; align-items: center; justify-content: center; }
.clip-body { display: flex; padding-top: 3px; }
.clip-main { width: 71px; display: flex; flex-direction: column; align-items: center; gap: 1px; padding-left: 5px; }
.clip-side { display: flex; flex-direction: column; gap: 6.500px; padding-top: 2px; }
.geom-body { display: flex; padding: 3px 0 0 6px; }
.geom-rows { width: 94px; display: flex; flex-direction: column; }
.grow { height: 21.500px; display: flex; align-items: center; gap: 4px; white-space: nowrap; color: #333; }
.grow.off { color: #b8b8b8; }
.grow .caret { margin-left: 4px; }
.geom-icons { display: grid; grid-template-columns: 18px 20px 10px; grid-auto-rows: 21.500px; align-items: center; column-gap: 6px; }
.edit-body { display: flex; gap: 9px; padding: 4px 0 0 7px; }
.edit-big { display: grid; grid-template-columns: repeat(4, 28px); column-gap: 7.500px; row-gap: 5px; align-content: start; }
.edit-small { display: grid; grid-template-columns: repeat(3, 16px); column-gap: 7px; row-gap: 7px; align-content: start; padding-top: 2px; }
.view-body { display: grid; grid-template-columns: 16px 8px 16px; column-gap: 3px; row-gap: 6px; align-items: center; padding: 7px 0 0 7px; justify-items: center; align-content: start; }
.measure-body { display: grid; grid-template-columns: 32px 12px; column-gap: 3px; row-gap: 8px; align-items: center; justify-items: center; padding: 7px 0 0 8px; align-content: start; }
.create-body { display: grid; grid-template-columns: 29px 29px; column-gap: 6px; row-gap: 3px; padding: 3px 0 0 6px; align-content: start; }
.two-btns { display: flex; justify-content: space-between; padding: 4px 3px 0; }
.one-btn { display: flex; justify-content: center; padding-top: 4px; }
.bigbtn { display: flex; flex-direction: column; align-items: center; text-align: center; line-height: 14px; color: #3a3a3a; white-space: nowrap; }
.bigbtn span { margin-top: 7px; }
.w-layout .bigbtn svg { margin: 2px 0 2px; }
.two-btns .bigbtn { width: 56px; }
.svg-help { font: bold 12px "Liberation Sans", sans-serif; fill: #1e5fb0; }
.svg-tag { font: 13px "Liberation Sans", sans-serif; fill: #222; }
.svg-2d { font: bold 9px "Liberation Sans", sans-serif; fill: #5b8fd0; }

/* options */
.options { height: 26px; flex: none; background: #d9e5cf; display: flex; align-items: center; padding-left: 10px; white-space: nowrap; color: #222; border-top: 1px solid #eef3e8; }
.opt-ctx { width: 244px; flex: none; letter-spacing: -.11px; }
.opt-sep { width: 1px; height: 20px; background: #aaa; margin: 0 8px 0 46px; box-shadow: 1px 0 0 #f4f4f4; }
.opt-sep2 { width: 1px; height: 20px; background: #aaa; margin: 0 10px 0 12px; box-shadow: 1px 0 0 #f4f4f4; }
.check { width: 12px; height: 12px; background: linear-gradient(135deg, #ddd, #fff); border: 1px solid #888; flex: none; }
.check.off-chk { border-color: #bbb; margin-left: 4px; }
.opt-rot { margin-left: 3px; width: 140px; letter-spacing: -.11px; }
.opt-select { width: 71px; height: 20px; margin-left: 2px; border: 1px solid #c0cbb6; display: flex; align-items: center; justify-content: space-between; padding: 0 4px 0 2px; color: #777; background: #d9e5cf; }
.opt-btn { width: 51px; height: 22px; margin-left: 8px; border: 1px solid #b5bfad; border-radius: 2px; display: flex; align-items: center; justify-content: center; color: #999; background: #e0eada; }
.opt-lead { margin-left: 2px; color: #888; width: 43px; }
.opt-ic2 { margin-left: 10px; }
.opt-input { width: 109px; height: 20px; margin-left: 1px; border: 1px solid #b5bfad; padding-left: 5px; line-height: 18px; color: #888; background: #d9e5cf; }

/* main */
.main { flex: 1; min-height: 0; display: flex; }
.side { width: 224px; flex: none; display: flex; flex-direction: column; background: #e8e8e8; padding-left: 1px; border-right: 1px solid #f4f4f4; }
.side-title { height: 16px; width: 218px; flex: none; margin-right: 4px; background: #9fb9d6; display: flex; align-items: center; justify-content: space-between; padding: 0 5px 0 4px; color: #1c2c40; }
.side-frame { flex: 1; min-height: 0; width: 218px; margin: 4px 0 0; border: 1px solid #a0a0a0; padding: 0 0 0 2px; background: #f0f0f0; display: flex; flex-direction: column; }
.type-sel { height: 68px; flex: none; background: linear-gradient(#d6edfa, #c5e6f7); border: 1px solid #2f8ad0; display: flex; padding: 3px; gap: 4px; position: relative; margin-right: 1px; }
.type-thumb { width: 60px; flex: none; background: #fff; border: 1px solid #ddd; display: flex; align-items: center; justify-content: center; }
.type-name { line-height: 14.500px; padding-top: 8px; color: #3c4a58; white-space: nowrap; }
.type-caret { position: absolute; right: 3px; top: 33px; }
.props { flex: 1; min-height: 0; display: flex; overflow: hidden; background: #fff; margin-right: 1px; }
.props-list { flex: 1; display: flex; flex-direction: column; justify-content: flex-end; min-width: 0; }
.prow { height: 16.500px; flex: none; display: grid; grid-template-columns: 98px 1fr; border-bottom: 1px dotted #888; }
.prow span { padding: 1px 0 0 10px; border-right: 1px dotted #888; white-space: nowrap; overflow: hidden; color: #333; }
.prow span + span { padding-left: 4px; border-right: 1px dotted #888; }
.prow.dim span { color: #999; }
.prow.clipped { height: 7px; border: 0; }
.phead { height: 16px; flex: none; background: #d8d8d8; display: flex; justify-content: space-between; align-items: center; padding: 0 7px 0 5px; color: #333; }
.props-scroll { width: 16px; flex: none; background: #f4f4f4; display: flex; flex-direction: column; justify-content: flex-end; align-items: center; padding-bottom: 5px; }
.props-foot { height: 25px; flex: none; display: flex; align-items: center; justify-content: space-between; padding: 0 3px 0 2px; }
.link { color: #1c74c8; text-decoration: underline; white-space: nowrap; }
.apply { width: 67px; height: 20px; border: 1px solid #bcbcbc; border-radius: 3px; color: #999; text-align: center; line-height: 18px; background: #f4f4f4; }
.side-tabs { height: 23px; flex: none; display: flex; align-items: flex-start; width: 218px; padding: 1px 0 0 1px; }
.stab { height: 21px; line-height: 20px; padding: 0 4px; background: #eee; color: #222; border: 1px solid #999; border-top-color: #333; border-radius: 0 0 3px 3px; white-space: nowrap; width: 157px; overflow: hidden; }
.stab.on { width: 57px; background: #f4f4f4; border: 0; border-right: 1px solid #777; padding-left: 6px; }

/* view */
.view { flex: 1; min-width: 0; display: flex; flex-direction: column; }
.view-row { flex: 1; min-height: 0; display: flex; }
.canvas { position: relative; flex: 1; min-width: 0; background: #fff; border-top: 1px solid #888; border-left: 1px solid #555; }
.drawing { display: block; }
.wall-o path { fill: none; stroke: #b8b8b8; stroke-width: 1.200; }
.wi-base { fill: none; stroke: #bcbcbc; stroke-width: 3.400; }
.wi-core { fill: none; stroke: #f2f2f2; stroke-width: 1.400; }
.thin { fill: none; stroke: #a8a8a8; stroke-width: 1; }
.windows path { fill: #fff; stroke: #bbb; stroke-width: 1; }
.door path { fill: none; stroke: #a8a8a8; stroke-width: 1; }
.blue-dash path { fill: none; stroke: #a8a8ee; stroke-width: 1; }
.cyan { fill: none; stroke: #88eef0; stroke-width: 1; stroke-dasharray: 6 3; }
.grid-h path, .grid-v path { fill: none; stroke: #000; stroke-width: 1; stroke-dasharray: 34 5 5 5; shape-rendering: crispEdges; }
.bubbles circle { fill: #fff; stroke: #111; stroke-width: 1; }
.fill-k { fill: #000; }
.bub-text text { font: 10.500px "Liberation Sans", sans-serif; text-anchor: middle; fill: #222; }
.win-ctrl { position: absolute; top: 7px; right: 6px; display: flex; align-items: center; gap: 5px; }
.nav-bar { position: absolute; right: 3px; top: 25px; width: 31px; height: 107px; border: 2px solid #c8c8c8; border-radius: 5px; background: #f6f6f6; display: flex; flex-direction: column; align-items: center; }
.nav-x, .nav-min { width: 7px; height: 7px; border-radius: 50%; background: #bbb; align-self: flex-end; margin: 2px 2px 0 0; flex: none; }
.nav-min { margin: auto 2px 2px 0; }
.nav-wheel { margin-top: 5px; }
.nav-c { margin-top: 6px; border-top-color: #888; }
.nav-sep { width: 23px; height: 1px; background: #ccc; margin-top: 6px; }
.nav-zoom { margin-top: 9px; }
.vscroll { width: 18px; flex: none; background: #ededed; border-left: 1px solid #d8d8d8; position: relative; display: flex; flex-direction: column; align-items: center; padding: 289px 5px 0 0; }
.vscroll .up { position: absolute; top: 7px; width: 0; height: 0; border: 3px solid transparent; border-bottom: 4px solid #333; border-top: 0; }
.vscroll .down { position: absolute; bottom: 8px; width: 0; height: 0; border: 3px solid transparent; border-top: 4px solid #333; border-bottom: 0; }
.v-thumb { width: 13px; height: 13px; background: #fff; border: 1px solid #aaa; border-radius: 2px; }
.view-bar { height: 17px; flex: none; display: flex; align-items: center; background: #f0f0f0; border-left: 1px solid #d0d0d0; }
.scale { width: 72px; padding-left: 22px; color: #222; white-space: nowrap; flex: none; }
.vb-icons { display: flex; align-items: center; gap: 5px; width: 194px; flex: none; }
.hscroll { flex: 1; display: flex; align-items: center; height: 100%; padding-right: 26px; }
.hscroll .left { width: 0; height: 0; border: 3px solid transparent; border-right: 4px solid #333; border-left: 0; margin-left: 4px; flex: none; }
.hscroll .right { width: 0; height: 0; border: 3px solid transparent; border-left: 4px solid #333; border-right: 0; flex: none; }
.h-track { flex: 1; display: flex; padding-left: 461px; }
.h-thumb { width: 13px; height: 13px; background: #fff; border: 1px solid #aaa; border-radius: 2px; }

/* status */
.status { height: 22px; flex: none; background: linear-gradient(#efefef, #b4b4b4); border-top: 1px solid #aaa; display: flex; align-items: center; padding-left: 3px; white-space: nowrap; color: #1e1e1e; }
.st-text { width: 484px; flex: none; overflow: hidden; }
.st-ic { margin-left: 6px; }
.st-combo { height: 18px; background: linear-gradient(#fdfdfd, #e8e8e8); border: 1px solid #c8c8c8; display: flex; align-items: center; justify-content: flex-end; padding-right: 4px; flex: none; }
.st-combo.wide { width: 189px; margin-left: 5px; }
.st-combo.model { width: 143px; justify-content: space-between; padding-left: 3px; margin-left: 5px; color: #888; }
.st-ic2 { margin-left: 4px; }
.st-zero { font-weight: bold; color: #222; margin-left: 3px; width: 26px; }
.st-zero.tight { margin-left: -8px; width: auto; }
.st-ic3 { margin-left: -4px; }
.st-ic3.gap { margin-left: 6px; }
.st-right { display: flex; align-items: center; gap: 8px; margin-left: auto; padding-right: 63px; }

/* overlay menu */
.menu { position: absolute; left: 6px; top: 240px; width: 518px; height: 356px; background: #fff; border: 1px solid #8a8a8a; border-top-color: #aaa; box-shadow: 2px 2px 3px #666; padding: 2px 1px 0 2px; color: #2a2a2a; }
.mgroup { height: 31px; display: flex; }
.mthumb { width: 30px; flex: none; background: #fff; display: flex; align-items: center; justify-content: center; }
.mname { flex: 1; background: #d6d6d6; display: flex; align-items: center; padding: 2px 0 0 1px; white-space: nowrap; overflow: hidden; }
.mitems { padding: 3px 0 1px; letter-spacing: -.1px; }
.mitems.single { height: 23.500px; padding: 1.500px 0 0; }
.mitems.tight { padding: 2px 0; height: 64px; padding-top: 2px; }
.mitem { height: 20px; line-height: 20px; padding-left: 31px; white-space: nowrap; }
.mitem.selected { margin-top: 2px; background: linear-gradient(#d6edfa, #c5e6f7); border: 1px solid #3a8fd0; line-height: 18px; padding-left: 31px; margin-left: -1px; letter-spacing: -.1px; }
.mouse { position: absolute; left: 207px; top: 205px; filter: drop-shadow(1px 1px 1px #777); }
```
